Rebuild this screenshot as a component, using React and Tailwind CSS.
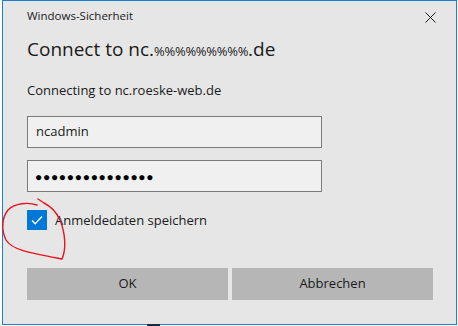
import React from 'react';

const font = { fontFamily: '"Open Sans", "Noto Sans", sans-serif' };

const App = () => {
    return (
        <div className="relative w-[458px] h-[326px] bg-white overflow-hidden" style={font}>
            {/* Dialog window */}
            <div className="ml-[2px] w-[455px] h-[325px] border border-[#1a7fd4] bg-[#e6e6e6] flex flex-col pl-[24px] pr-[22px]">
                <div className="flex items-center justify-between pt-[7px] h-[23px]">
                    <span className="text-[11.5px] leading-[16px] text-[#1a1a1a]">Windows-Sicherheit</span>
                    <svg className="w-[11px] h-[11px] mr-[-2px] mt-[2px]" viewBox="0 0 11 11" fill="none" stroke="#1a1a1a" strokeWidth="1">
                        <path d="M0.5 0.5l10 10M10.5 0.5l-10 10" />
                    </svg>
                </div>

                <h1 className="mt-[11px] h-[28px] text-[19px] leading-[28px] text-[#1a1a1a]">
                    Connect to nc.<span className="text-[13px] leading-none tracking-[-0.3px]">%%%%%%%%%</span>.de
                </h1>

                <p className="mt-[17px] text-[13px] leading-[20px] text-[#1a1a1a]">Connecting to nc.roeske-web.de</p>

                <div className="mt-[16px] w-[295px] h-[32px] border border-[#7a7a7a] bg-[#f0f0f0] flex items-center pl-[8px] text-[13px] text-[#1a1a1a]">
                    ncadmin
                </div>
                <div className="mt-[12px] w-[295px] h-[32px] border border-[#7a7a7a] bg-[#f0f0f0] flex items-center pl-[7px] pt-[2px] text-[12px] tracking-[0.7px] text-black">
                    ●●●●●●●●●●●●●●●
                </div>

                <div className="mt-[18px] flex items-center gap-[8px]">
                    <div className="w-[20px] h-[20px] bg-[#0078d7] flex items-center justify-center">
                        <svg className="w-[14px] h-[14px]" viewBox="0 0 14 14" fill="none" stroke="white" strokeWidth="1.3">
                            <path d="M2 7.5l3.2 3.2L12 3.5" />
                        </svg>
                    </div>
                    <span className="text-[13px] leading-[20px] text-[#1a1a1a]">Anmeldedaten speichern</span>
                </div>

                <div className="mt-[38px] flex gap-[4px]">
                    <button className="w-[201px] h-[32px] bg-[#b6b6b6] text-[13px] text-[#1a1a1a]">OK</button>
                    <button className="w-[201px] h-[32px] bg-[#b6b6b6] text-[13px] text-[#1a1a1a]">Abbrechen</button>
                </div>
            </div>

            {/* Red annotation scribble */}
            <svg className="absolute left-0 top-0 w-[80px] h-[270px] pointer-events-none" viewBox="0 0 80 270" fill="none" stroke="#e8141b" strokeWidth="1.4" strokeLinecap="round">
                <path d="M37 205C28 202 15 203 8 210C2 217 1 230 6 240C12 250 30 253 62 259C66 250 66 235 60 220C56 211 50 206 44 203L38 199" />
            </svg>

            {/* Desktop behind */}
            <div className="absolute left-[147px] top-[324px] w-[13px] h-[2px] bg-[#1c2a3a]" />
        </div>
    );
};

export default App;
